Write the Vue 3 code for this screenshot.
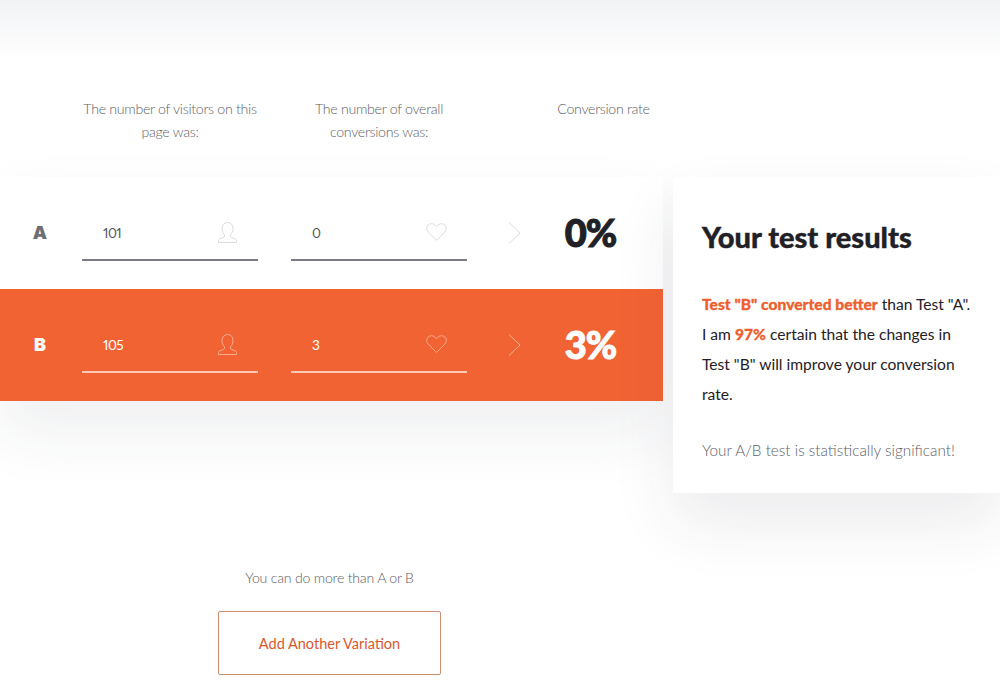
<script setup>
const heads = [
  { text: "The number of visitors on this page was:", cls: "head-visitors" },
  { text: "The number of overall conversions was:", cls: "head-conv" },
  { text: "Conversion rate", cls: "head-rate" }
]

const variations = [
  { name: "A", visitors: "101", conversions: "0", rate: "0%", active: false },
  { name: "B", visitors: "105", conversions: "3", rate: "3%", active: true }
]
</script>

<template>
  <div class="page">
    <div class="top-fade"></div>

    <div class="heads">
      <p v-for="h in heads" :key="h.cls" :class="['head', h.cls]">{{ h.text }}</p>
    </div>

    <div class="main">
      <div class="left">
        <div class="rows">
          <div
            v-for="v in variations"
            :key="v.name"
            :class="['row', { active: v.active }]"
          >
            <div class="letter">{{ v.name }}</div>

            <div class="field">
              <span class="value">{{ v.visitors }}</span>
              <svg class="icon user" width="19" height="21" viewBox="0 0 19 21" fill="none">
                <path d="M9.500.5C6.200.5 4 3 4 6.300c0 2.700 1 5 2.500 6.500v1.500c0 .5-.3.8-.8 1L1.500 17c-.6.3-1 .8-1 1.500v2h18v-2c0-.7-.4-1.200-1-1.500l-4.200-1.700c-.5-.2-.8-.5-.8-1v-1.500c1.500-1.500 2.500-3.800 2.500-6.500C15 3 12.800.5 9.500.5Z" stroke="currentColor" stroke-width="0.9" stroke-linejoin="round" />
              </svg>
            </div>

            <div class="field">
              <span class="value">{{ v.conversions }}</span>
              <svg class="icon heart" width="21" height="20" viewBox="0 0 22 20" fill="none">
                <path d="M11 18.800 2.300 10.100C.2 8 .2 4.800 2.100 2.800 4.100.8 7.300.8 9.400 2.800L11 4.400l1.600-1.600c2.100-2 5.300-2 7.300 0 1.900 2 1.900 5.200-.2 7.300L11 18.800Z" stroke="currentColor" stroke-width="0.9" stroke-linejoin="round" />
              </svg>
            </div>

            <svg class="arrow" width="13" height="22" viewBox="0 0 13 22" fill="none">
              <path d="M1 .5 12 11 1 21.500" stroke="currentColor" stroke-width="1" />
            </svg>

            <div class="rate">{{ v.rate }}</div>
          </div>
        </div>

        <div class="more">
          <p class="more-text">You can do more than A or B</p>
          <button class="add-btn">Add Another Variation</button>
        </div>
      </div>

      <div class="results">
        <h2>Your test results</h2>
        <p class="summary">
          <b>Test "B" converted better</b> than Test "A". I am <b>97%</b> certain that the changes in Test "B" will improve your conversion rate.
        </p>
        <p class="significant">Your A/B test is statistically significant!</p>
      </div>
    </div>
  </div>
</template>

<style>
html,
body {
  margin: 0;
  background: #fff;
}
</style>

<style scoped>
.page {
  width: 1000px;
  height: 689px;
  overflow: hidden;
  background: #fff;
  color: #1f2126;
  font-family: Lato, "Liberation Sans", sans-serif;
}

.top-fade {
  height: 62px;
  background: linear-gradient(#f2f3f5, #fff);
}

.heads {
  height: 115px;
  box-sizing: border-box;
  padding-top: 35px;
  display: grid;
  grid-template-columns: 82px 176px 33px 176px 1fr;
  width: 663px;
}

.head {
  margin: 0;
  font-size: 14.2px;
  font-weight: 300;
  letter-spacing: -0.3px;
  line-height: 23px;
  text-align: center;
  color: #5e6066;
}

.head-visitors {
  grid-column: 2;
}

.head-conv {
  grid-column: 4;
  padding: 0 20px;
}

.head-rate {
  grid-column: 5;
  padding-left: 77px;
}

.main {
  display: flex;
  align-items: flex-start;
}

.left {
  width: 663px;
  flex: none;
}

.rows {
  box-shadow: 0 30px 60px rgba(40, 45, 70, 0.08);
}

.row {
  height: 112px;
  display: grid;
  grid-template-columns: 82px 176px 33px 176px 41px 13px 1fr;
  align-items: start;
  background: #fff;
}

.row.active {
  background: #f26334;
  color: #fff;
}

.letter {
  grid-column: 1;
  margin-top: 45px;
  padding-right: 2px;
  text-align: center;
  font-family: Inter, sans-serif;
  font-size: 18px;
  font-weight: 900;
  line-height: 22px;
  color: #6c6f76;
}

.active .letter {
  color: #fff;
}

.field {
  height: 84px;
  box-sizing: border-box;
  padding: 46px 20px 0 21px;
  display: flex;
  justify-content: space-between;
  align-items: flex-start;
  border-bottom: 2px solid #7b7d83;
  color: #55585e;
}

.row .field:nth-child(3) {
  grid-column: 4;
}

.active .field {
  border-bottom-color: #fbc9b6;
  color: #fff;
}

.value {
  font-size: 13.6px;
  font-variant-numeric: proportional-nums;
  letter-spacing: -0.5px;
  line-height: 20px;
}

.icon {
  margin-top: -1px;
  color: #d5d6d8;
}

.user {
  margin-right: 1px;
}

.active .icon,
.active .arrow {
  color: #f9b49b;
}

.arrow {
  grid-column: 6;
  margin-top: 45px;
  color: #dcdde0;
}

.rate {
  margin-top: 30px;
  text-align: center;
  padding-right: 3px;
  font-size: 38px;
  font-weight: 900;
  letter-spacing: -1px;
  line-height: 50px;
  -webkit-text-stroke: 1px #1f2126;
  color: #1f2126;
}

.active .rate {
  -webkit-text-stroke-color: #fff;
  color: #fff;
}

.more {
  width: 659px;
  margin-top: 166px;
  display: flex;
  flex-direction: column;
  align-items: center;
}

.more-text {
  margin: 0;
  font-size: 14.2px;
  font-weight: 300;
  letter-spacing: -0.25px;
  line-height: 22px;
  color: #5e6066;
}

.add-btn {
  width: 223px;
  height: 64px;
  margin-top: 22px;
  background: #fff;
  border: 1px solid #cf8a72;
  border-radius: 2px;
  font-family: inherit;
  font-size: 14.5px;
  color: #d9582e;
}

.results {
  margin-left: 10px;
  flex: 1;
  height: 316px;
  box-sizing: border-box;
  padding: 41px 28px 0 29px;
  background: #fff;
  box-shadow: 0 30px 60px rgba(40, 45, 70, 0.09);
}

.results h2 {
  margin: 0;
  font-size: 29px;
  font-weight: 900;
  line-height: 38px;
  -webkit-text-stroke: 0.4px #1f2126;
  color: #1f2126;
}

.summary {
  margin: 33px 0 0;
  font-size: 15.6px;
  line-height: 30px;
  color: #1f2126;
}

.summary b {
  font-weight: 900;
  color: #ee5f30;
  -webkit-text-stroke: 0.3px #ee5f30;
}

.significant {
  margin: 26px 0 0;
  font-size: 15.3px;
  font-weight: 300;
  line-height: 30px;
  color: #5e6066;
}
</style>
